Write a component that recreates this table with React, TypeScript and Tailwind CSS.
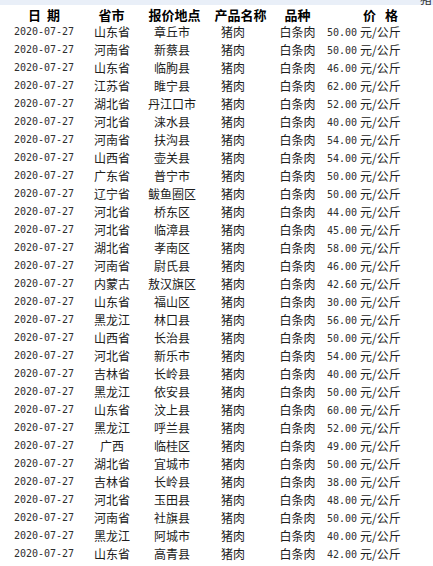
import React from "react";

const rows: [string, string, string][] = [
  ["山东省", "章丘市", "50.00"],
  ["河南省", "新蔡县", "50.00"],
  ["山东省", "临朐县", "46.00"],
  ["江苏省", "睢宁县", "62.00"],
  ["湖北省", "丹江口市", "52.00"],
  ["河北省", "涞水县", "40.00"],
  ["河南省", "扶沟县", "54.00"],
  ["山西省", "壶关县", "54.00"],
  ["广东省", "普宁市", "50.00"],
  ["辽宁省", "鲅鱼圈区", "50.00"],
  ["河北省", "桥东区", "44.00"],
  ["河北省", "临漳县", "45.00"],
  ["湖北省", "孝南区", "58.00"],
  ["河南省", "尉氏县", "46.00"],
  ["内蒙古", "敖汉旗区", "42.60"],
  ["山东省", "福山区", "30.00"],
  ["黑龙江", "林口县", "56.00"],
  ["山西省", "长治县", "50.00"],
  ["河北省", "新乐市", "54.00"],
  ["吉林省", "长岭县", "40.00"],
  ["黑龙江", "依安县", "50.00"],
  ["山东省", "汶上县", "60.00"],
  ["黑龙江", "呼兰县", "52.00"],
  ["广西", "临桂区", "49.00"],
  ["湖北省", "宜城市", "50.00"],
  ["吉林省", "长岭县", "38.00"],
  ["河北省", "玉田县", "48.00"],
  ["河南省", "社旗县", "50.00"],
  ["黑龙江", "阿城市", "40.00"],
  ["山东省", "高青县", "42.00"],
];

const cjk = "font-['Noto_Sans_CJK_SC',sans-serif]";
const mono = "font-['DejaVu_Sans_Mono',monospace]";

export default function App() {
  return (
    <div className={`w-[433px] h-[566px] bg-white overflow-hidden ${cjk} text-[#1c1c1c]`}>
      <div className="h-[5px] bg-[#e9eff8] overflow-hidden flex justify-end pr-[1px]">
        <span className="text-[12px] leading-[12px] mt-[-7px] text-[#333]">猪</span>
      </div>
      <div className="h-[18px] flex items-center text-[13px] font-bold text-black leading-none">
        <div className="w-[88px] text-center [word-spacing:3px]">日 期</div>
        <div className="w-[47px] text-center">省市</div>
        <div className="w-[79px] text-center">报价地点</div>
        <div className="w-[53px] text-center">产品名称</div>
        <div className="w-[61px] text-center">品种</div>
        <div className="w-[105px] text-center whitespace-pre [word-spacing:6px]">价 格</div>
      </div>
      {rows.map((r, i) => (
        <div key={i} className="h-[18px] flex items-center text-[12px] leading-none">
          <div className={`w-[88px] text-center text-[10px] text-[#2e2e2e] ${mono}`}>2020-07-27</div>
          <div className="w-[48px] text-center">{r[0]}</div>
          <div className="w-[72px] text-center">{r[1]}</div>
          <div className="w-[70px] pr-[20px] text-center">猪肉</div>
          <div className="w-[39px] text-center">白条肉</div>
          <div className={`w-[40px] text-right text-[10px] pt-[2px] text-[#2e2e2e] ${mono}`}>{r[2]}</div>
          <div className="pl-[3px]">元/公斤</div>
        </div>
      ))}
    </div>
  );
}
